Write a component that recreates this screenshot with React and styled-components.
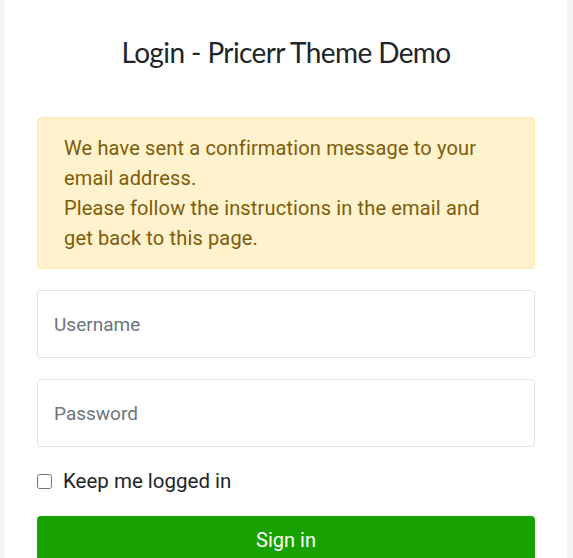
import React from 'react';
import styled, { createGlobalStyle } from 'styled-components';

const GlobalStyle = createGlobalStyle`
  body {
    margin: 0;
    background: #f3f4f5;
    font-family: Roboto, 'Liberation Sans', sans-serif;
  }
`;

const Page = styled.div`
  padding: 0 6px 0 5px;
  margin-top: -6px;
`;

const Card = styled.div`
  background: #fff;
  border-radius: 10px;
  padding: 37px 32px 40px;
`;

const Title = styled.h1`
  margin: 0;
  padding: 4px 0 48px;
  text-align: center;
  font-family: Lato, sans-serif;
  font-weight: 400;
  font-size: 28px;
  letter-spacing: -0.6px;
  color: #212529;
`;

const Alert = styled.div`
  background: #fff2cc;
  border: 1px solid #ffeab0;
  border-radius: 4px;
  color: #7d5c0a;
  font-size: 20px;
  letter-spacing: 0.15px;
  line-height: 30px;
  padding: 15px 26px;
  margin-bottom: 21px;
`;

const Input = styled.input`
  display: block;
  box-sizing: border-box;
  width: 100%;
  height: 68px;
  border: 1px solid #e2e4e6;
  border-radius: 4px;
  padding: 0 16px;
  font-family: Roboto, sans-serif;
  font-size: 19px;
  color: #212529;
  margin-bottom: 21px;
  outline: none;
  &::placeholder {
    color: #6c757d;
  }
`;

const CheckRow = styled.label`
  display: flex;
  align-items: center;
  gap: 11px;
  height: 24px;
  font-size: 20.5px;
  color: #212529;
  margin: 22px 0 23px;
  input {
    margin: 0;
    width: 15px;
    height: 15px;
  }
`;

const Button = styled.button`
  display: block;
  width: 100%;
  height: 48px;
  border: none;
  border-radius: 4px;
  background: #18a200;
  color: #fff;
  font-family: Roboto, sans-serif;
  font-size: 20px;
`;

export default function App() {
  return (
    <>
      <GlobalStyle />
      <Page>
        <Card>
          <Title>Login - Pricerr Theme Demo</Title>
          <Alert>
            We have sent a confirmation message to your email address.
            <br />
            Please follow the instructions in the email and get back to this page.
          </Alert>
          <Input type="text" placeholder="Username" />
          <Input type="password" placeholder="Password" />
          <CheckRow>
            <input type="checkbox" />
            Keep me logged in
          </CheckRow>
          <Button>Sign in</Button>
        </Card>
      </Page>
    </>
  );
}
